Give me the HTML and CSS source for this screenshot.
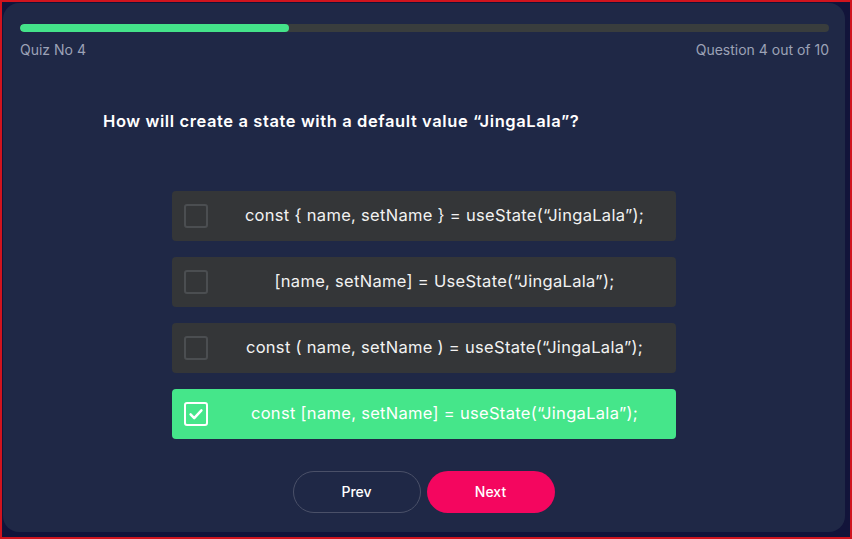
FILE: index.html
```html
<!DOCTYPE html>
<html lang="en">
<head>
<meta charset="utf-8">
<title>Quiz</title>
<link rel="stylesheet" href="styles.css">
</head>
<body>
<div class="frame">
  <main class="card">
    <div class="progress"><div class="progress-fill" style="width: 33.2%"></div></div>
    <div class="meta">
      <span>Quiz No 4</span>
      <span>Question 4 out of 10</span>
    </div>
    <h1 class="question">How will create a state with a default value “JingaLala”?</h1>
    <ul class="options">
      <li class="option"><span class="box"></span><span class="label">const { name, setName } = useState(“JingaLala”);</span></li>
      <li class="option"><span class="box"></span><span class="label">[name, setName] = UseState(“JingaLala”);</span></li>
      <li class="option"><span class="box"></span><span class="label">const ( name, setName ) = useState(“JingaLala”);</span></li>
      <li class="option selected"><span class="box"><svg viewBox="0 0 20 20" width="18" height="18"><path d="M4 10.5l4 4L16 6" fill="none" stroke="#fff" stroke-width="2.8" stroke-linecap="round" stroke-linejoin="round"/></svg></span><span class="label">const [name, setName] = useState(“JingaLala”);</span></li>
    </ul>
    <div class="nav">
      <button class="btn prev">Prev</button>
      <button class="btn next">Next</button>
    </div>
  </main>
</div>
</body>
</html>
```
FILE: styles.css
```css
* { box-sizing: border-box; }
html, body { margin: 0; padding: 0; }
body {
  font-family: "Inter", "Noto Sans", sans-serif;
  background: #13163a;
}
.frame {
  width: 852px;
  height: 539px;
  border: 2px solid #d0141e;
  padding: 1px;
  background: #12143a;
}
.card {
  width: 842px;
  height: 529px;
  border-radius: 16px;
  background: #1f2846;
  padding: 21px 16px 0 17px;
}
.progress {
  height: 8px;
  border-radius: 4px;
  background: #393d3d;
  overflow: hidden;
}
.progress-fill {
  height: 100%;
  border-radius: 4px;
  background: #44e38a;
}
.meta {
  display: flex;
  justify-content: space-between;
  margin-top: 9px;
  font-size: 14px;
  line-height: 18px;
  color: #9ca2b6;
}
.question {
  margin: 50px 0 0 83px;
  font-size: 16.5px;
  line-height: 24px;
  font-weight: 600;
  letter-spacing: 0.6px;
  color: #ffffff;
}
.options {
  list-style: none;
  margin: 58px auto 0;
  padding: 0;
  width: 504px;
  display: flex;
  flex-direction: column;
  gap: 16px;
  position: relative;
  left: -1px;
}
.option {
  height: 50px;
  border-radius: 4px;
  background: #343638;
  display: flex;
  align-items: center;
  padding: 0 0 0 12px;
  color: #f2f2f2;
  font-size: 16.5px;
  letter-spacing: 0.3px;
}
.box {
  width: 24px;
  height: 24px;
  flex: none;
  border: 2px solid #4b4e51;
  border-radius: 3px;
  display: flex;
  align-items: center;
  justify-content: center;
}
.label {
  flex: 1;
  text-align: center;
  padding: 0 0 3px 6px;
}
.option.selected {
  background: #45e68a;
  color: #ffffff;
}
.option.selected .box {
  border-color: #ffffff;
}
.nav {
  display: flex;
  justify-content: center;
  gap: 6px;
  margin-top: 32px;
  position: relative;
  left: -1px;
}
.btn {
  width: 128px;
  height: 42px;
  border-radius: 21px;
  font-family: inherit;
  font-size: 14px;
  font-weight: 500;
  color: #ffffff;
  cursor: pointer;
  padding: 0 0 2px;
}
.prev {
  background: transparent;
  border: 1px solid #4a5068;
}
.next {
  background: #f4065f;
  border: none;
}
```
